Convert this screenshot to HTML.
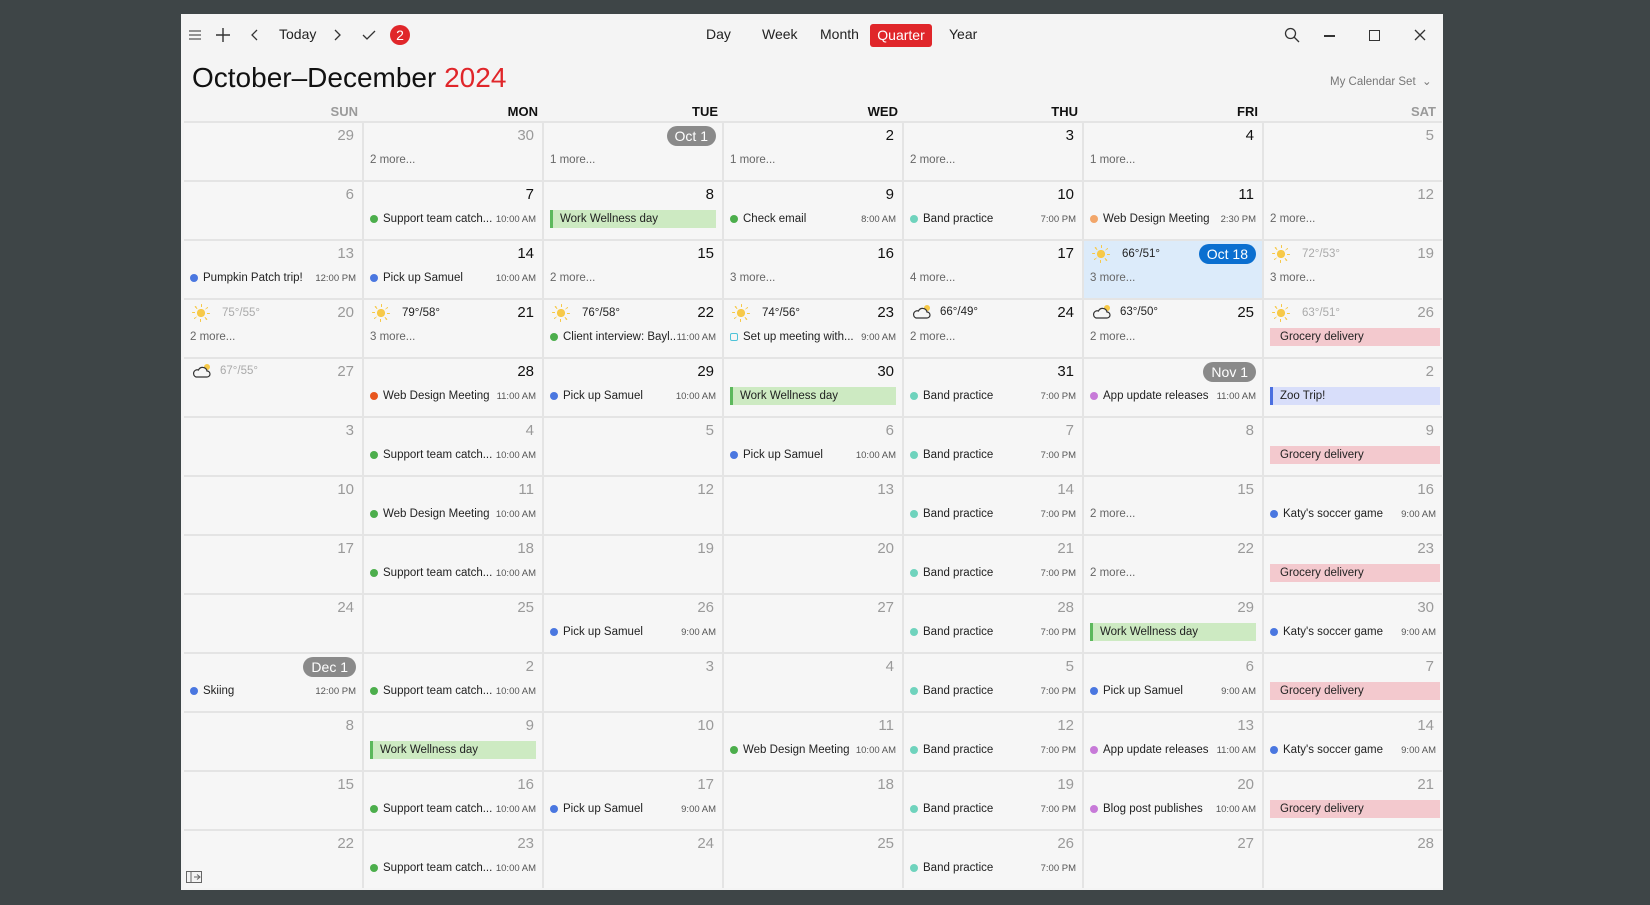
<!DOCTYPE html>
<html><head><meta charset="utf-8"><style>
*{box-sizing:border-box;margin:0;padding:0}
body{width:1650px;height:905px;background:#3e4547;font-family:"Liberation Sans",sans-serif;position:relative;overflow:hidden}
.win{position:absolute;left:181px;top:14px;width:1262px;height:876px;background:#f4f4f4}
.tb{position:absolute;font-size:14px;color:#222}
.grid{position:absolute;left:3px;top:107px;width:1258px;display:grid;grid-template-columns:repeat(7,1fr);grid-auto-rows:57px;gap:2px;background:#e4e4e4;border-top:2px solid #e4e4e4}
.c{position:relative;background:#f6f6f6}
.d{position:absolute;right:8px;top:4px;font-size:15px;color:#111}
.g .d{color:#9a9a9a}
.p{position:absolute;right:6px;top:3px;font-size:14px;color:#fff;background:#8a8a8a;border-radius:10px;padding:2px 8px}
.e{position:absolute;left:6px;right:6px;top:28px;height:18px;display:flex;align-items:center;font-size:11.5px;color:#222;white-space:nowrap}
.e i{width:8px;height:8px;border-radius:50%;margin-right:5px;flex:none}
.e b{font-weight:normal;flex:1;overflow:hidden}
.e s{text-decoration:none;font-size:9.5px;color:#555}
.m{color:#666}
.bar{padding-left:7px;border-left:3px solid #5cb85c;background:#cdeac2}
.gr{padding-left:10px;background:#f3c9ce;right:2px}
.w{position:absolute;left:8px;top:4px;font-size:11.5px;color:#222;display:flex;align-items:center}
.w.l{color:#aaa}
.sun{width:18px;height:18px;margin-right:12px;display:inline-block;border-radius:50%;background:radial-gradient(circle,#f7c948 0 4px,transparent 5px),repeating-conic-gradient(#f7c948 0 8deg,transparent 8deg 45deg);-webkit-mask:radial-gradient(circle,#000 0 4px,transparent 4px 6px,#000 6px 9px,transparent 9px);mask:radial-gradient(circle,#000 0 4px,transparent 4px 6px,#000 6px 9px,transparent 9px)}
.cl{width:20px;height:16px;margin-right:8px}
.hd{position:absolute;top:90px;font-size:13px;font-weight:bold;color:#111;text-align:right;width:170px}
</style></head><body>
<svg width="0" height="0" style="position:absolute"><defs><symbol id="cloud" viewBox="0 0 20 16"><circle cx="15" cy="4" r="3" fill="#f7c948"/><path d="M4 14h11a3 3 0 0 0 0-6 4.5 4.5 0 0 0-8.5-1A3.5 3.5 0 0 0 4 14z" fill="#f6f6f6" stroke="#333" stroke-width="1.2"/></symbol></defs></svg>
<div class="win">
<svg class="tb" style="left:7px;top:14px" width="14" height="14" viewBox="0 0 14 14"><path d="M1 3h12M1 7h12M1 11h12" stroke="#555" stroke-width="1.2"/></svg>
<svg class="tb" style="left:34px;top:13px" width="16" height="16" viewBox="0 0 16 16"><path d="M8 1v14M1 8h14" stroke="#333" stroke-width="1.4"/></svg>
<svg class="tb" style="left:70px;top:15px" width="8" height="12" viewBox="0 0 8 12"><path d="M6 1L1 6l5 5" fill="none" stroke="#333" stroke-width="1.3"/></svg>
<div class="tb" style="left:98px;top:12px">Today</div>
<svg class="tb" style="left:152px;top:15px" width="8" height="12" viewBox="0 0 8 12"><path d="M2 1l5 5-5 5" fill="none" stroke="#333" stroke-width="1.3"/></svg>
<svg class="tb" style="left:181px;top:15px" width="14" height="12" viewBox="0 0 14 12"><path d="M1 6l4 4 8-8" fill="none" stroke="#333" stroke-width="1.3"/></svg>
<div class="tb" style="left:209px;top:11px;width:20px;height:20px;border-radius:50%;background:#e0262a;color:#fff;text-align:center;line-height:20px">2</div>
<div class="tb" style="left:525px;top:12px">Day</div>
<div class="tb" style="left:581px;top:12px">Week</div>
<div class="tb" style="left:639px;top:12px">Month</div>
<div class="tb" style="left:689px;top:10px;width:62px;height:23px;background:#e0262a;color:#fff;border-radius:3px;text-align:center;line-height:23px">Quarter</div>
<div class="tb" style="left:768px;top:12px">Year</div>
<svg class="tb" style="left:1103px;top:13px" width="16" height="16" viewBox="0 0 16 16"><circle cx="6.5" cy="6.5" r="5" fill="none" stroke="#333" stroke-width="1.3"/><path d="M10 10l5 5" stroke="#333" stroke-width="1.3"/></svg>
<div class="tb" style="left:1143px;top:21px;width:11px;height:1.5px;background:#333"></div>
<div class="tb" style="left:1188px;top:16px;width:11px;height:11px;border:1.3px solid #333"></div>
<svg class="tb" style="left:1233px;top:15px" width="12" height="12" viewBox="0 0 12 12"><path d="M1 1l10 10M11 1L1 11" stroke="#333" stroke-width="1.3"/></svg>
<div class="tb" style="left:11px;top:48px;font-size:28px;color:#111">October–December <span style="color:#e0262a">2024</span></div>
<div class="tb" style="left:1149px;top:60px;font-size:11.5px;color:#777">My Calendar Set &nbsp;⌄</div>
<div class="hd" style="left:7px;color:#9a9a9a">SUN</div>
<div class="hd" style="left:187px">MON</div>
<div class="hd" style="left:367px">TUE</div>
<div class="hd" style="left:547px">WED</div>
<div class="hd" style="left:727px">THU</div>
<div class="hd" style="left:907px">FRI</div>
<div class="hd" style="left:1085px;color:#9a9a9a">SAT</div>
<div class="grid">
<div class="c g"><span class="d">29</span></div>
<div class="c g"><span class="d">30</span><div class="e m">2 more...</div></div>
<div class="c"><span class="p">Oct 1</span><div class="e m">1 more...</div></div>
<div class="c"><span class="d">2</span><div class="e m">1 more...</div></div>
<div class="c"><span class="d">3</span><div class="e m">2 more...</div></div>
<div class="c"><span class="d">4</span><div class="e m">1 more...</div></div>
<div class="c g"><span class="d">5</span></div>
<div class="c g"><span class="d">6</span></div>
<div class="c"><span class="d">7</span><div class="e"><i style="background:#4cae4c"></i><b>Support team catch...</b><s>10:00 AM</s></div></div>
<div class="c"><span class="d">8</span><div class="e bar">Work Wellness day</div></div>
<div class="c"><span class="d">9</span><div class="e"><i style="background:#4cae4c"></i><b>Check email</b><s>8:00 AM</s></div></div>
<div class="c"><span class="d">10</span><div class="e"><i style="background:#6fd3bd"></i><b>Band practice</b><s>7:00 PM</s></div></div>
<div class="c"><span class="d">11</span><div class="e"><i style="background:#f2a66a"></i><b>Web Design Meeting</b><s>2:30 PM</s></div></div>
<div class="c g"><span class="d">12</span><div class="e m">2 more...</div></div>
<div class="c g"><span class="d">13</span><div class="e"><i style="background:#4a77e0"></i><b>Pumpkin Patch trip!</b><s>12:00 PM</s></div></div>
<div class="c"><span class="d">14</span><div class="e"><i style="background:#4a77e0"></i><b>Pick up Samuel</b><s>10:00 AM</s></div></div>
<div class="c"><span class="d">15</span><div class="e m">2 more...</div></div>
<div class="c"><span class="d">16</span><div class="e m">3 more...</div></div>
<div class="c"><span class="d">17</span><div class="e m">4 more...</div></div>
<div class="c" style="background:#dcebfa"><span class="w"><span class="sun"></span>66°/51°</span><span class="p" style="background:#0b6fd0">Oct 18</span><div class="e m">3 more...</div></div>
<div class="c g"><span class="w l"><span class="sun"></span>72°/53°</span><span class="d">19</span><div class="e m">3 more...</div></div>
<div class="c g"><span class="w l"><span class="sun"></span>75°/55°</span><span class="d">20</span><div class="e m">2 more...</div></div>
<div class="c"><span class="w"><span class="sun"></span>79°/58°</span><span class="d">21</span><div class="e m">3 more...</div></div>
<div class="c"><span class="w"><span class="sun"></span>76°/58°</span><span class="d">22</span><div class="e"><i style="background:#4cae4c"></i><b>Client interview: Bayl...</b><s>11:00 AM</s></div></div>
<div class="c"><span class="w"><span class="sun"></span>74°/56°</span><span class="d">23</span><div class="e"><i style="border:1.3px solid #4ec3d8;border-radius:2px"></i><b>Set up meeting with...</b><s>9:00 AM</s></div></div>
<div class="c"><span class="w"><svg class="cl"><use href="#cloud"/></svg>66°/49°</span><span class="d">24</span><div class="e m">2 more...</div></div>
<div class="c"><span class="w"><svg class="cl"><use href="#cloud"/></svg>63°/50°</span><span class="d">25</span><div class="e m">2 more...</div></div>
<div class="c g"><span class="w l"><span class="sun"></span>63°/51°</span><span class="d">26</span><div class="e gr">Grocery delivery</div></div>
<div class="c g"><span class="w l"><svg class="cl"><use href="#cloud"/></svg>67°/55°</span><span class="d">27</span></div>
<div class="c"><span class="d">28</span><div class="e"><i style="background:#e8561e"></i><b>Web Design Meeting</b><s>11:00 AM</s></div></div>
<div class="c"><span class="d">29</span><div class="e"><i style="background:#4a77e0"></i><b>Pick up Samuel</b><s>10:00 AM</s></div></div>
<div class="c"><span class="d">30</span><div class="e bar">Work Wellness day</div></div>
<div class="c"><span class="d">31</span><div class="e"><i style="background:#6fd3bd"></i><b>Band practice</b><s>7:00 PM</s></div></div>
<div class="c"><span class="p">Nov 1</span><div class="e"><i style="background:#c77ad8"></i><b>App update releases</b><s>11:00 AM</s></div></div>
<div class="c g"><span class="d">2</span><div class="e bar" style="background:#d8defa;border-color:#4a6fe0;right:2px">Zoo Trip!</div></div>
<div class="c g"><span class="d">3</span></div>
<div class="c g"><span class="d">4</span><div class="e"><i style="background:#4cae4c"></i><b>Support team catch...</b><s>10:00 AM</s></div></div>
<div class="c g"><span class="d">5</span></div>
<div class="c g"><span class="d">6</span><div class="e"><i style="background:#4a77e0"></i><b>Pick up Samuel</b><s>10:00 AM</s></div></div>
<div class="c g"><span class="d">7</span><div class="e"><i style="background:#6fd3bd"></i><b>Band practice</b><s>7:00 PM</s></div></div>
<div class="c g"><span class="d">8</span></div>
<div class="c g"><span class="d">9</span><div class="e gr">Grocery delivery</div></div>
<div class="c g"><span class="d">10</span></div>
<div class="c g"><span class="d">11</span><div class="e"><i style="background:#4cae4c"></i><b>Web Design Meeting</b><s>10:00 AM</s></div></div>
<div class="c g"><span class="d">12</span></div>
<div class="c g"><span class="d">13</span></div>
<div class="c g"><span class="d">14</span><div class="e"><i style="background:#6fd3bd"></i><b>Band practice</b><s>7:00 PM</s></div></div>
<div class="c g"><span class="d">15</span><div class="e m">2 more...</div></div>
<div class="c g"><span class="d">16</span><div class="e"><i style="background:#4a77e0"></i><b>Katy's soccer game</b><s>9:00 AM</s></div></div>
<div class="c g"><span class="d">17</span></div>
<div class="c g"><span class="d">18</span><div class="e"><i style="background:#4cae4c"></i><b>Support team catch...</b><s>10:00 AM</s></div></div>
<div class="c g"><span class="d">19</span></div>
<div class="c g"><span class="d">20</span></div>
<div class="c g"><span class="d">21</span><div class="e"><i style="background:#6fd3bd"></i><b>Band practice</b><s>7:00 PM</s></div></div>
<div class="c g"><span class="d">22</span><div class="e m">2 more...</div></div>
<div class="c g"><span class="d">23</span><div class="e gr">Grocery delivery</div></div>
<div class="c g"><span class="d">24</span></div>
<div class="c g"><span class="d">25</span></div>
<div class="c g"><span class="d">26</span><div class="e"><i style="background:#4a77e0"></i><b>Pick up Samuel</b><s>9:00 AM</s></div></div>
<div class="c g"><span class="d">27</span></div>
<div class="c g"><span class="d">28</span><div class="e"><i style="background:#6fd3bd"></i><b>Band practice</b><s>7:00 PM</s></div></div>
<div class="c g"><span class="d">29</span><div class="e bar">Work Wellness day</div></div>
<div class="c g"><span class="d">30</span><div class="e"><i style="background:#4a77e0"></i><b>Katy's soccer game</b><s>9:00 AM</s></div></div>
<div class="c g"><span class="p">Dec 1</span><div class="e"><i style="background:#4a77e0"></i><b>Skiing</b><s>12:00 PM</s></div></div>
<div class="c g"><span class="d">2</span><div class="e"><i style="background:#4cae4c"></i><b>Support team catch...</b><s>10:00 AM</s></div></div>
<div class="c g"><span class="d">3</span></div>
<div class="c g"><span class="d">4</span></div>
<div class="c g"><span class="d">5</span><div class="e"><i style="background:#6fd3bd"></i><b>Band practice</b><s>7:00 PM</s></div></div>
<div class="c g"><span class="d">6</span><div class="e"><i style="background:#4a77e0"></i><b>Pick up Samuel</b><s>9:00 AM</s></div></div>
<div class="c g"><span class="d">7</span><div class="e gr">Grocery delivery</div></div>
<div class="c g"><span class="d">8</span></div>
<div class="c g"><span class="d">9</span><div class="e bar">Work Wellness day</div></div>
<div class="c g"><span class="d">10</span></div>
<div class="c g"><span class="d">11</span><div class="e"><i style="background:#4cae4c"></i><b>Web Design Meeting</b><s>10:00 AM</s></div></div>
<div class="c g"><span class="d">12</span><div class="e"><i style="background:#6fd3bd"></i><b>Band practice</b><s>7:00 PM</s></div></div>
<div class="c g"><span class="d">13</span><div class="e"><i style="background:#c77ad8"></i><b>App update releases</b><s>11:00 AM</s></div></div>
<div class="c g"><span class="d">14</span><div class="e"><i style="background:#4a77e0"></i><b>Katy's soccer game</b><s>9:00 AM</s></div></div>
<div class="c g"><span class="d">15</span></div>
<div class="c g"><span class="d">16</span><div class="e"><i style="background:#4cae4c"></i><b>Support team catch...</b><s>10:00 AM</s></div></div>
<div class="c g"><span class="d">17</span><div class="e"><i style="background:#4a77e0"></i><b>Pick up Samuel</b><s>9:00 AM</s></div></div>
<div class="c g"><span class="d">18</span></div>
<div class="c g"><span class="d">19</span><div class="e"><i style="background:#6fd3bd"></i><b>Band practice</b><s>7:00 PM</s></div></div>
<div class="c g"><span class="d">20</span><div class="e"><i style="background:#c77ad8"></i><b>Blog post publishes</b><s>10:00 AM</s></div></div>
<div class="c g"><span class="d">21</span><div class="e gr">Grocery delivery</div></div>
<div class="c g"><span class="d">22</span></div>
<div class="c g"><span class="d">23</span><div class="e"><i style="background:#4cae4c"></i><b>Support team catch...</b><s>10:00 AM</s></div></div>
<div class="c g"><span class="d">24</span></div>
<div class="c g"><span class="d">25</span></div>
<div class="c g"><span class="d">26</span><div class="e"><i style="background:#6fd3bd"></i><b>Band practice</b><s>7:00 PM</s></div></div>
<div class="c g"><span class="d">27</span></div>
<div class="c g"><span class="d">28</span></div>
</div>
<svg class="tb" style="left:5px;top:857px" width="16" height="12" viewBox="0 0 16 12"><rect x="0.5" y="0.5" width="15" height="11" fill="#f4f4f4" stroke="#666"/><path d="M5 1v10M8 6h6M11 3.5l3 2.5-3 2.5" fill="none" stroke="#666"/></svg>
</div>
</body></html>
